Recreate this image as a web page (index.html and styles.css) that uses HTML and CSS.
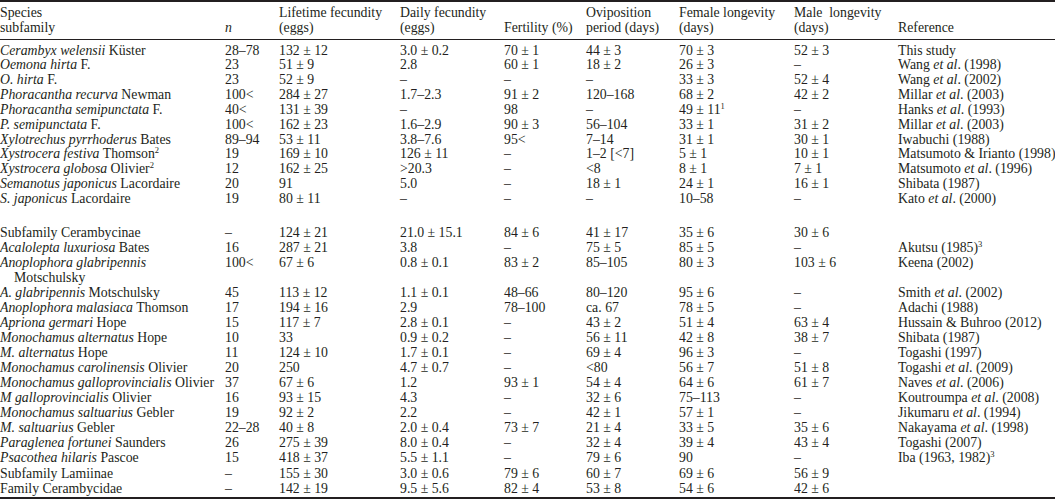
FILE: index.html
```html
<!DOCTYPE html>
<html lang="en">
<head>
<meta charset="utf-8">
<title>Fecundity table</title>
<link rel="stylesheet" href="styles.css">
</head>
<body>
<table class="data">
  <colgroup>
    <col class="c-species"><col class="c-n"><col class="c-life"><col class="c-daily"><col class="c-fert"><col class="c-ovi"><col class="c-female"><col class="c-male"><col class="c-ref">
  </colgroup>
  <thead>
    <tr>
      <th>Species<br>subfamily</th>
      <th><i>n</i></th>
      <th>Lifetime fecundity<br>(eggs)</th>
      <th>Daily fecundity<br>(eggs)</th>
      <th>Fertility (%)</th>
      <th>Oviposition<br>period (days)</th>
      <th>Female longevity<br>(days)</th>
      <th>Male&nbsp; longevity<br>(days)</th>
      <th>Reference</th>
    </tr>
  </thead>
  <tbody class="group-a">
    <tr class="first"><td><i>Cerambyx welensii</i> Küster</td><td>28–78</td><td>132 ± 12</td><td>3.0 ± 0.2</td><td>70 ± 1</td><td>44 ± 3</td><td>70 ± 3</td><td>52 ± 3</td><td>This study</td></tr>
    <tr><td><i>Oemona hirta</i> F.</td><td>23</td><td>51 ± 9</td><td>2.8</td><td>60 ± 1</td><td>18 ± 2</td><td>26 ± 3</td><td>–</td><td>Wang <i>et al</i>. (1998)</td></tr>
    <tr><td><i>O. hirta</i> F.</td><td>23</td><td>52 ± 9</td><td>–</td><td>–</td><td>–</td><td>33 ± 3</td><td>52 ± 4</td><td>Wang <i>et al</i>. (2002)</td></tr>
    <tr><td><i>Phoracantha recurva</i> Newman</td><td>100&lt;</td><td>284 ± 27</td><td>1.7–2.3</td><td>91 ± 2</td><td>120–168</td><td>68 ± 2</td><td>42 ± 2</td><td>Millar <i>et al</i>. (2003)</td></tr>
    <tr><td><i>Phoracantha semipunctata</i> F.</td><td>40&lt;</td><td>131 ± 39</td><td>–</td><td>98</td><td>–</td><td>49 ± 11<sup>1</sup></td><td>–</td><td>Hanks <i>et al</i>. (1993)</td></tr>
    <tr><td><i>P. semipunctata</i> F.</td><td>100&lt;</td><td>162 ± 23</td><td>1.6–2.9</td><td>90 ± 3</td><td>56–104</td><td>33 ± 1</td><td>31 ± 2</td><td>Millar <i>et al</i>. (2003)</td></tr>
    <tr><td><i>Xylotrechus pyrrhoderus</i> Bates</td><td>89–94</td><td>53 ± 11</td><td>3.8–7.6</td><td>95&lt;</td><td>7–14</td><td>31 ± 1</td><td>30 ± 1</td><td>Iwabuchi (1988)</td></tr>
    <tr><td><i>Xystrocera festiva</i> Thomson<sup>2</sup></td><td>19</td><td>169 ± 10</td><td>126 ± 11</td><td>–</td><td>1–2 [&lt;7]</td><td>5 ± 1</td><td>10 ± 1</td><td>Matsumoto &amp; Irianto (1998)</td></tr>
    <tr><td><i>Xystrocera globosa</i> Olivier<sup>2</sup></td><td>12</td><td>162 ± 25</td><td>&gt;20.3</td><td>–</td><td>&lt;8</td><td>8 ± 1</td><td>7 ± 1</td><td>Matsumoto <i>et al</i>. (1996)</td></tr>
    <tr><td><i>Semanotus japonicus</i> Lacordaire</td><td>20</td><td>91</td><td>5.0</td><td>–</td><td>18 ± 1</td><td>24 ± 1</td><td>16 ± 1</td><td>Shibata (1987)</td></tr>
    <tr><td><i>S. japonicus</i> Lacordaire</td><td>19</td><td>80 ± 11</td><td>–</td><td>–</td><td>–</td><td>10–58</td><td>–</td><td>Kato <i>et al</i>. (2000)</td></tr>
    <tr class="gap"><td></td><td></td><td></td><td></td><td></td><td></td><td></td><td></td><td></td></tr>
  </tbody>
  <tbody class="group-b">
    <tr><td>Subfamily Cerambycinae</td><td>–</td><td>124 ± 21</td><td>21.0 ± 15.1</td><td>84 ± 6</td><td>41 ± 17</td><td>35 ± 6</td><td>30 ± 6</td><td></td></tr>
    <tr><td><i>Acalolepta luxuriosa</i> Bates</td><td>16</td><td>287 ± 21</td><td>3.8</td><td>–</td><td>75 ± 5</td><td>85 ± 5</td><td>–</td><td>Akutsu (1985)<sup>3</sup></td></tr>
    <tr><td class="hang"><i>Anoplophora glabripennis</i><br>Motschulsky</td><td>100&lt;</td><td>67 ± 6</td><td>0.8 ± 0.1</td><td>83 ± 2</td><td>85–105</td><td>80 ± 3</td><td>103 ± 6</td><td>Keena (2002)</td></tr>
    <tr><td><i>A. glabripennis</i> Motschulsky</td><td>45</td><td>113 ± 12</td><td>1.1 ± 0.1</td><td>48–66</td><td>80–120</td><td>95 ± 6</td><td>–</td><td>Smith <i>et al</i>. (2002)</td></tr>
    <tr><td><i>Anoplophora malasiaca</i> Thomson</td><td>17</td><td>194 ± 16</td><td>2.9</td><td>78–100</td><td>ca. 67</td><td>78 ± 5</td><td>–</td><td>Adachi (1988)</td></tr>
    <tr><td><i>Apriona germari</i> Hope</td><td>15</td><td>117 ± 7</td><td>2.8 ± 0.1</td><td>–</td><td>43 ± 2</td><td>51 ± 4</td><td>63 ± 4</td><td>Hussain &amp; Buhroo (2012)</td></tr>
    <tr><td><i>Monochamus alternatus</i> Hope</td><td>10</td><td>33</td><td>0.9 ± 0.2</td><td>–</td><td>56 ± 11</td><td>42 ± 8</td><td>38 ± 7</td><td>Shibata (1987)</td></tr>
    <tr><td><i>M. alternatus</i> Hope</td><td>11</td><td>124 ± 10</td><td>1.7 ± 0.1</td><td>–</td><td>69 ± 4</td><td>96 ± 3</td><td>–</td><td>Togashi (1997)</td></tr>
    <tr><td><i>Monochamus carolinensis</i> Olivier</td><td>20</td><td>250</td><td>4.7 ± 0.7</td><td>–</td><td>&lt;80</td><td>56 ± 7</td><td>51 ± 8</td><td>Togashi <i>et al</i>. (2009)</td></tr>
    <tr><td><i>Monochamus galloprovincialis</i> Olivier</td><td>37</td><td>67 ± 6</td><td>1.2</td><td>93 ± 1</td><td>54 ± 4</td><td>64 ± 6</td><td>61 ± 7</td><td>Naves <i>et al</i>. (2006)</td></tr>
    <tr><td><i>M galloprovincialis</i> Olivier</td><td>16</td><td>93 ± 15</td><td>4.3</td><td>–</td><td>32 ± 6</td><td>75–113</td><td>–</td><td>Koutroumpa <i>et al</i>. (2008)</td></tr>
    <tr><td><i>Monochamus saltuarius</i> Gebler</td><td>19</td><td>92 ± 2</td><td>2.2</td><td>–</td><td>42 ± 1</td><td>57 ± 1</td><td>–</td><td>Jikumaru <i>et al</i>. (1994)</td></tr>
    <tr><td><i>M. saltuarius</i> Gebler</td><td>22–28</td><td>40 ± 8</td><td>2.0 ± 0.4</td><td>73 ± 7</td><td>21 ± 4</td><td>33 ± 5</td><td>35 ± 6</td><td>Nakayama <i>et al</i>. (1998)</td></tr>
    <tr><td><i>Paraglenea fortunei</i> Saunders</td><td>26</td><td>275 ± 39</td><td>8.0 ± 0.4</td><td>–</td><td>32 ± 4</td><td>39 ± 4</td><td>43 ± 4</td><td>Togashi (2007)</td></tr>
    <tr><td><i>Psacothea hilaris</i> Pascoe</td><td>15</td><td>418 ± 37</td><td>5.5 ± 1.1</td><td>–</td><td>79 ± 6</td><td>90</td><td>–</td><td>Iba (1963, 1982)<sup>3</sup></td></tr>
    <tr><td>Subfamily Lamiinae</td><td>–</td><td>155 ± 30</td><td>3.0 ± 0.6</td><td>79 ± 6</td><td>60 ± 7</td><td>69 ± 6</td><td>56 ± 9</td><td></td></tr>
    <tr class="last"><td>Family Cerambycidae</td><td>–</td><td>142 ± 19</td><td>9.5 ± 5.6</td><td>82 ± 4</td><td>53 ± 8</td><td>54 ± 6</td><td>42 ± 6</td><td></td></tr>
  </tbody>
</table>
</body>
</html>
```

FILE: styles.css
```css
html, body {
  margin: 0;
  padding: 0;
  background: #ffffff;
}

body {
  font-family: "Liberation Serif", "Times New Roman", serif;
  font-size: 13.8px;
  color: #231f20;
}

.data {
  width: 1055px;
  table-layout: fixed;
  border-collapse: separate;
  border-spacing: 0;
}

.c-species { width: 225px; }
.c-n { width: 54px; }
.c-life { width: 121px; }
.c-daily { width: 104px; }
.c-fert { width: 82px; }
.c-ovi { width: 93px; }
.c-female { width: 115px; }
.c-male { width: 104px; }
.c-ref { width: 157px; }

.data th,
.data td {
  padding: 0;
  text-align: left;
  white-space: nowrap;
  vertical-align: top;
  overflow: visible;
}

.data th {
  font-weight: normal;
  vertical-align: bottom;
  line-height: 15px;
  border-top: 2px solid #231f20;
  border-bottom: 1px solid #231f20;
  padding-top: 3px;
  padding-bottom: 4px;
}

.group-a td {
  line-height: 14.85px;
}

.group-b td {
  line-height: 15.05px;
}

.data tr.first td {
  padding-top: 3.5px;
}

.data tr.gap td {
  height: 18px;
}

.data tr.last td {
  padding-bottom: 1px;
  border-bottom: 2px solid #231f20;
}

.hang {
  padding-left: 14px !important;
  text-indent: -14px;
}

sup {
  font-size: 0.62em;
  line-height: 0;
  vertical-align: baseline;
  position: relative;
  top: -0.6em;
}
```
